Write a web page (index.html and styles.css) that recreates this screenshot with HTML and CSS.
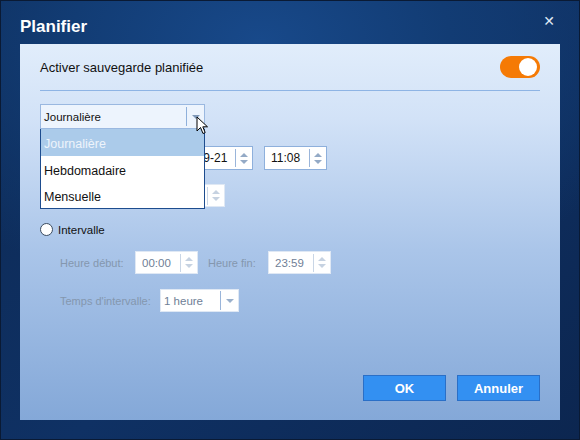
FILE: index.html
```html
<!DOCTYPE html>
<html lang="fr">
<head>
<meta charset="utf-8">
<title>Planifier</title>
<link rel="stylesheet" href="styles.css">
</head>
<body>
<div class="window">
  <div class="titlebar">
    <span class="title">Planifier</span>
    <span class="close">✕</span>
  </div>
  <div class="panel">
    <div class="head-row">
      <span class="head-label">Activer sauvegarde planifiée</span>
      <span class="toggle"><span class="knob"></span></span>
    </div>

    <div class="select-wrap">
      <div class="select main-select">
        <span class="select-text">Journalière</span>
        <span class="select-btn"><span class="tri"></span></span>
      </div>
      <ul class="dropdown">
        <li class="opt selected">Journalière</li>
        <li class="opt">Hebdomadaire</li>
        <li class="opt">Mensuelle</li>
      </ul>
      <svg class="cursor" width="13" height="20" viewBox="0 0 13 20">
        <path d="M1 1 L1 15 L4.5 11.5 L7 17.5 L9.2 16.6 L6.8 10.8 L11.5 10.8 Z" fill="#fff" stroke="#000" stroke-width="1" stroke-linejoin="miter"/>
      </svg>
    </div>

    <div class="row row-date">
      <span class="spacer date-spacer"></span>
      <div class="field date-field">
        <span class="val">2024-09-21</span>
        <span class="spin"><span class="up"></span><span class="down"></span></span>
      </div>
      <div class="field time-field">
        <span class="val">11:08</span>
        <span class="spin"><span class="up"></span><span class="down"></span></span>
      </div>
    </div>

    <div class="row row-every">
      <span class="spacer every-spacer"></span>
      <div class="field disabled every-field">
        <span class="val"></span>
        <span class="spin"><span class="up"></span><span class="down"></span></span>
      </div>
    </div>

    <div class="row row-radio">
      <span class="radio"></span>
      <span class="radio-label">Intervalle</span>
    </div>

    <div class="row row-hours">
      <span class="lbl dim lbl-start">Heure début:</span>
      <div class="field disabled small-field">
        <span class="val">00:00</span>
        <span class="spin"><span class="up"></span><span class="down"></span></span>
      </div>
      <span class="lbl dim lbl-end">Heure fin:</span>
      <div class="field disabled small-field">
        <span class="val">23:59</span>
        <span class="spin"><span class="up"></span><span class="down"></span></span>
      </div>
    </div>

    <div class="row row-interval">
      <span class="lbl dim lbl-interval">Temps d'intervalle:</span>
      <div class="select disabled-select">
        <span class="select-text">1 heure</span>
        <span class="select-btn"><span class="tri"></span></span>
      </div>
    </div>

    <div class="footer">
      <button class="btn">OK</button>
      <button class="btn">Annuler</button>
    </div>
  </div>
</div>
</body>
</html>
```
FILE: styles.css
```css
* { box-sizing: border-box; }
html, body { margin: 0; padding: 0; }
body {
  width: 580px;
  height: 440px;
  overflow: hidden;
  font-family: "Liberation Sans", Arial, sans-serif;
  font-size: 12px;
  color: #111;
}
.window {
  width: 580px;
  height: 440px;
  display: flex;
  flex-direction: column;
  border: 1px solid #0a1a34;
  background:
    radial-gradient(ellipse 420px 260px at 260px 40px, #18498a 0%, #123c74 45%, rgba(14,46,92,0) 100%),
    linear-gradient(135deg, #0d2a55 0%, #0f3164 50%, #0c2650 100%);
}
.titlebar {
  height: 43px;
  display: flex;
  align-items: center;
  justify-content: space-between;
  padding: 0 24px 0 19px;
}
.title {
  color: #fff;
  font-weight: bold;
  font-size: 17px;
  margin-top: 8px;
}
.close {
  color: #dfe8f5;
  font-size: 14px;
  font-weight: bold;
  margin-top: -3px;
  font-family: "DejaVu Sans", sans-serif;
}
.panel {
  flex: 1;
  margin: 0 19px 19px 19px;
  padding: 0 20px;
  background: linear-gradient(180deg, #e1edfb 0%, #d2e2f7 20%, #aac5e9 55%, #84a8d8 100%);
  display: flex;
  flex-direction: column;
  position: relative;
}
.head-row {
  height: 47px;
  display: flex;
  align-items: center;
  justify-content: space-between;
  border-bottom: 1px solid #8eb4e4;
}
.head-label {
  font-size: 13px;
  color: #111;
  padding-top: 1px;
}
.toggle {
  width: 40px;
  height: 22px;
  border-radius: 11px;
  background: #f57a05;
  position: relative;
}
.knob {
  position: absolute;
  right: 3px;
  top: 2px;
  width: 18px;
  height: 18px;
  border-radius: 50%;
  background: #fff;
}

.select-wrap {
  margin-top: 13px;
  position: relative;
  width: 165px;
  z-index: 5;
}
.select {
  height: 25px;
  display: flex;
  align-items: center;
  border: 1px solid #9ab8e0;
  background: #edf4fd;
}
.select-text {
  flex: 1;
  padding-left: 3px;
  font-size: 11.5px;
  white-space: nowrap;
}
.select-btn {
  width: 18px;
  height: 19px;
  border-left: 1px solid #8fb0db;
  display: flex;
  align-items: center;
  justify-content: center;
}
.tri {
  width: 0;
  height: 0;
  border-left: 4px solid transparent;
  border-right: 4px solid transparent;
  border-top: 4px solid #7f98b8;
}
.dropdown {
  position: absolute;
  left: 0;
  top: 25px;
  width: 165px;
  margin: 0;
  padding: 0;
  list-style: none;
  background: #fff;
  border: 1px solid #1d4c8e;
  border-top: none;
}
.opt {
  height: 26px;
  display: flex;
  align-items: center;
  padding: 3px 0 0 3px;
  font-size: 12.5px;
  color: #111;
}
.opt.selected {
  background: #abcbea;
  color: #eef4fb;
  height: 27px;
}
.cursor {
  position: absolute;
  left: 156px;
  top: 12px;
}

.row {
  display: flex;
  align-items: center;
}
.spacer { display: block; height: 1px; flex: none; }
.lbl { font-size: 11px; white-space: nowrap; }
.dim { color: #8497ae; }
.field {
  height: 24px;
  display: flex;
  align-items: center;
  background: #fff;
  border: 1px solid #8eb0dc;
  flex: none;
}
.field .val {
  flex: 1;
  padding-left: 6px;
  font-size: 12px;
  white-space: nowrap;
}
.spin {
  width: 17px;
  height: 18px;
  flex: none;
  border-left: 1px solid #9ab5da;
  display: flex;
  flex-direction: column;
  align-items: center;
  justify-content: center;
  gap: 3px;
}
.spin .up {
  width: 0; height: 0;
  border-left: 4px solid transparent;
  border-right: 4px solid transparent;
  border-bottom: 4px solid #94aac6;
}
.spin .down {
  width: 0; height: 0;
  border-left: 4px solid transparent;
  border-right: 4px solid transparent;
  border-top: 4px solid #94aac6;
}
.field.disabled {
  border-color: #dfe8f4;
  height: 23px;
}
.field.disabled .val { color: #6f8096; font-size: 11.5px; }
.field.disabled .spin { border-left-color: #c9d6e6; }
.field.disabled .spin .up { border-bottom-color: #c6d2e1; }
.field.disabled .spin .down { border-top-color: #c6d2e1; }

.row-date {
  margin-top: 17px;
}
.date-spacer { width: 123px; }
.date-field { width: 90px; }
.date-field .val { padding-left: 2px; }
.time-field { width: 63px; margin-left: 11px; }
.row-every { margin-top: 14px; }
.every-spacer { width: 118px; }
.every-field { width: 67px; }

.row-radio {
  margin-top: 16px;
  height: 13px;
}
.radio {
  width: 13px;
  height: 13px;
  border-radius: 50%;
  border: 1px solid #3a4b60;
  background: #fff;
}
.radio-label {
  margin-left: 5px;
  font-size: 11.5px;
  color: #111;
}
.row-hours {
  margin-top: 15px;
  padding-left: 20px;
}
.lbl-start { width: 75px; }
.lbl-end { margin-left: 10px; width: 60px; }
.small-field { width: 63px; }
.row-interval {
  margin-top: 15px;
  padding-left: 20px;
}
.lbl-interval { width: 100px; }
.disabled-select {
  width: 79px;
  height: 23px;
  background: #fff;
  border-color: #dfe8f4;
}
.disabled-select .select-text { color: #6f8096; padding-left: 3px; }
.disabled-select .select-btn { border-left-color: #9ab5da; width: 18px; }
.disabled-select .tri { border-top-color: #9ab0cb; }

.footer {
  margin-top: auto;
  margin-bottom: 19px;
  display: flex;
  justify-content: flex-end;
  gap: 11px;
}
.btn {
  width: 83px;
  height: 26px;
  border: 1px solid #2a6fc7;
  background: #3390f2;
  color: #fff;
  font-family: "Liberation Sans", Arial, sans-serif;
  font-weight: bold;
  font-size: 13px;
  padding: 0;
}
```
